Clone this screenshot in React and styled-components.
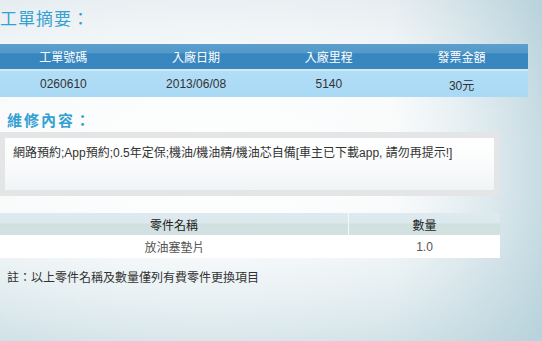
import React from "react";
import styled, { createGlobalStyle } from "styled-components";

const Global = createGlobalStyle`
html, body {
  margin:0;
  padding:0;
}
body {
  width:542px;
  height:341px;
  overflow:hidden;
  font-family:"Liberation Sans","Noto Sans CJK TC",sans-serif;
  color:#333;
}
`;

const Page = styled.div`
width:542px;
height:341px;
overflow:hidden;
background:
  radial-gradient(ellipse 420px 260px at 210px 170px, rgba(255,255,255,0.95), rgba(255,255,255,0) 100%),
  linear-gradient(90deg, rgba(255,255,255,0) 72%, #b9d3dc 100%),
  linear-gradient(180deg, #e0e9ed 0%, #f5f8f9 30%, #f4f7f8 60%, #c6dbe2 100%);
display:flex;
flex-direction:column;
`;

const Title = styled.div`
margin:9px 0 0 0;
height:22px;
font-size:17px;
letter-spacing:1px;
color:#35a0d2;
line-height:22px;
`;

const SubTitle = styled.div`
margin:0 0 0 7px;
font-size:15px;
letter-spacing:2px;
font-weight:bold;
color:#35a0d2;
line-height:18px;
`;

const SummaryTable = styled.div`
margin:13px 0 0 -3px;
width:531px;
`;

const Row = styled.div`
display:grid;
grid-template-columns:repeat(${({cols})=>cols||4}, 1fr);
`;

const HeadRow = styled(Row)`
height:25px;
background:linear-gradient(180deg, #5c9fcd 0%, #5299c9 35%, #3886bf 40%, #3a87c0 100%);
border-bottom:2px solid #cfe9f8;
`;

const DataRow = styled(Row)`
height:26px;
background:linear-gradient(180deg, #b2ddf6 0%, #a9d9f5 100%);
`;

const Cell = styled.div`
display:flex;
align-items:center;
justify-content:center;
font-size:12px;
color:${({head})=>head?'#ffffff':'#333'};
`;

const ContentBox = styled.div`
margin:2px 0 0 0;
width:500px;
box-sizing:border-box;
height:64px;
border:6px solid #e3e5e6;
border-left-width:5px;
background:linear-gradient(180deg, #ffffff 0%, #fbfcfc 40%, #f1f4f6 100%);
padding:6px 8px;
font-size:12px;
line-height:18px;
color:#333;
`;

const PartsTable = styled.div`
margin:17px 0 0 0;
width:500px;
`;

const PartsHead = styled.div`
display:grid;
grid-template-columns:349px 1fr;
height:22px;
background:linear-gradient(180deg, #deeaef 0%, #dbe8ec 45%, #cfe0df 50%, #d2e2e2 100%);
`;

const PartsRow = styled.div`
display:grid;
grid-template-columns:349px 1fr;
height:23px;
background:#ffffff;
`;

const PartCell = styled.div`
display:flex;
align-items:center;
justify-content:center;
font-size:12px;
color:${({head})=>head?'#222':'#555'};
border-right:${({split})=>split?'1px solid #f4f8f9':'none'};
`;

const Note = styled.div`
margin:12px 0 0 7px;
font-size:12px;
line-height:16px;
color:#333;
`;

const Spacer = styled.div`
height:${({h})=>h}px;
`;

const summary = {
  head:['工單號碼','入廠日期','入廠里程','發票金額'],
  data:['0260610','2013/06/08','5140','30元'],
};

export default function App(){
  return(
    <Page>
      <Global/>
      <Title>工單摘要：</Title>
      <SummaryTable>
        <HeadRow>
          {summary.head.map(h => <Cell head key={h}>{h}</Cell>)}
        </HeadRow>
        <DataRow>
          {summary.data.map(d => <Cell key={d}>{d}</Cell>)}
        </DataRow>
      </SummaryTable>
      <Spacer h={15}/>
      <SubTitle>維修內容：</SubTitle>
      <ContentBox>網路預約;App預約;0.5年定保;機油/機油精/機油芯自備[車主已下載app, 請勿再提示!]</ContentBox>
      <PartsTable>
        <PartsHead>
          <PartCell head split>零件名稱</PartCell>
          <PartCell head>數量</PartCell>
        </PartsHead>
        <PartsRow>
          <PartCell>放油塞墊片</PartCell>
          <PartCell>1.0</PartCell>
        </PartsRow>
      </PartsTable>
      <Note>註：以上零件名稱及數量僅列有費零件更換項目</Note>
    </Page>
  );
}
